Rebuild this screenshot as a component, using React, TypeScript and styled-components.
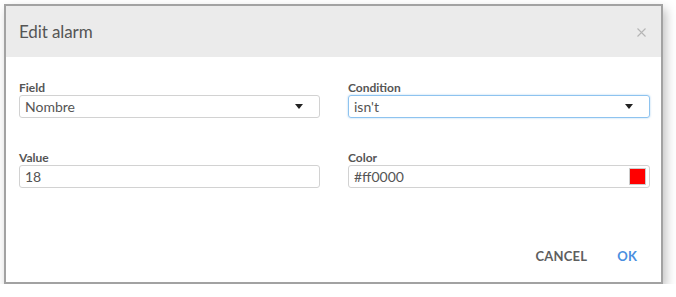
import React from "react";
import styled, { createGlobalStyle } from "styled-components";

const Global = createGlobalStyle`
  html, body { margin: 0; padding: 0; background: #fff; }
  body { font-family: Lato, "Open Sans", sans-serif; }
`;

const Page = styled.div`
  padding: 4px 0 0 4px;
`;

const Dialog = styled.div`
  box-sizing: border-box;
  width: 659px;
  height: 280px;
  border: 2px solid #a2a2a2;
  background: #fff;
  box-shadow: 3px 5px 10px rgba(0, 0, 0, 0.25);
  display: flex;
  flex-direction: column;
`;

const Header = styled.div`
  height: 51px;
  background: #ebebeb;
  display: flex;
  align-items: center;
  justify-content: space-between;
  padding: 0 14px 0 13px;
`;

const Title = styled.h2`
  margin: 0;
  font-size: 17px;
  font-weight: 400;
  color: #555;
  letter-spacing: -0.1px;
`;

const Close = styled.button`
  border: 0;
  background: none;
  padding: 0;
  width: 12px;
  height: 12px;
  display: flex;
  align-items: center;
  justify-content: center;
  margin-top: 2px;
`;

const Body = styled.div`
  flex: 1;
  display: grid;
  grid-template-columns: 301px 302px;
  column-gap: 28px;
  row-gap: 33px;
  align-content: start;
  padding: 24px 0 0 13px;
`;

const FieldBox = styled.div`
  display: flex;
  flex-direction: column;
`;

const Label = styled.label`
  font-size: 12px;
  line-height: 14px;
  font-weight: 700;
  color: #555;
`;

const InputBox = styled.div<{ $focus?: boolean }>`
  box-sizing: border-box;
  height: 23px;
  border: 1px solid ${(p) => (p.$focus ? "#8ec3ef" : "#d2d2d2")};
  border-radius: 3px;
  box-shadow: ${(p) => (p.$focus ? "0 0 2px rgba(100,170,230,0.6)" : "none")};
  display: flex;
  align-items: center;
  padding: 0 5px 0 5px;
  font-size: 14px;
  color: #555;
`;

const Text = styled.span`
  flex: 1;
`;

const Caret = styled.span`
  width: 0;
  height: 0;
  border-left: 4px solid transparent;
  border-right: 4px solid transparent;
  border-top: 5px solid #222;
  margin-right: 11px;
`;

const Swatch = styled.span<{ $color: string }>`
  box-sizing: border-box;
  width: 17px;
  height: 17px;
  background: ${(p) => p.$color};
  border: 1px solid #ccc;
  margin-right: -2px;
`;

const Footer = styled.div`
  display: flex;
  justify-content: flex-end;
  gap: 14px;
  padding: 0 16px 8px 0;
`;

const Btn = styled.button<{ $primary?: boolean }>`
  height: 36px;
  border: 0;
  background: none;
  padding: 0 8px;
  font-family: Lato, "Open Sans", sans-serif;
  font-size: 13px;
  font-weight: 700;
  letter-spacing: 0.2px;
  color: ${(p) => (p.$primary ? "#4a8fe0" : "#5e5e5e")};
`;

export default function App() {
  return (
    <Page>
      <Global />
      <Dialog>
        <Header>
          <Title>Edit alarm</Title>
          <Close aria-label="close">
            <svg width="9" height="9" viewBox="0 0 9 9">
              <path d="M0.5 0.5 L8.5 8.5 M8.5 0.5 L0.5 8.5" stroke="#b5b5b5" strokeWidth="1.1" />
            </svg>
          </Close>
        </Header>
        <Body>
          <FieldBox>
            <Label>Field</Label>
            <InputBox>
              <Text>Nombre</Text>
              <Caret />
            </InputBox>
          </FieldBox>
          <FieldBox>
            <Label>Condition</Label>
            <InputBox $focus>
              <Text>isn't</Text>
              <Caret />
            </InputBox>
          </FieldBox>
          <FieldBox>
            <Label>Value</Label>
            <InputBox>
              <Text>18</Text>
            </InputBox>
          </FieldBox>
          <FieldBox>
            <Label>Color</Label>
            <InputBox>
              <Text>#ff0000</Text>
              <Swatch $color="#ff0000" />
            </InputBox>
          </FieldBox>
        </Body>
        <Footer>
          <Btn>CANCEL</Btn>
          <Btn $primary>OK</Btn>
        </Footer>
      </Dialog>
    </Page>
  );
}
